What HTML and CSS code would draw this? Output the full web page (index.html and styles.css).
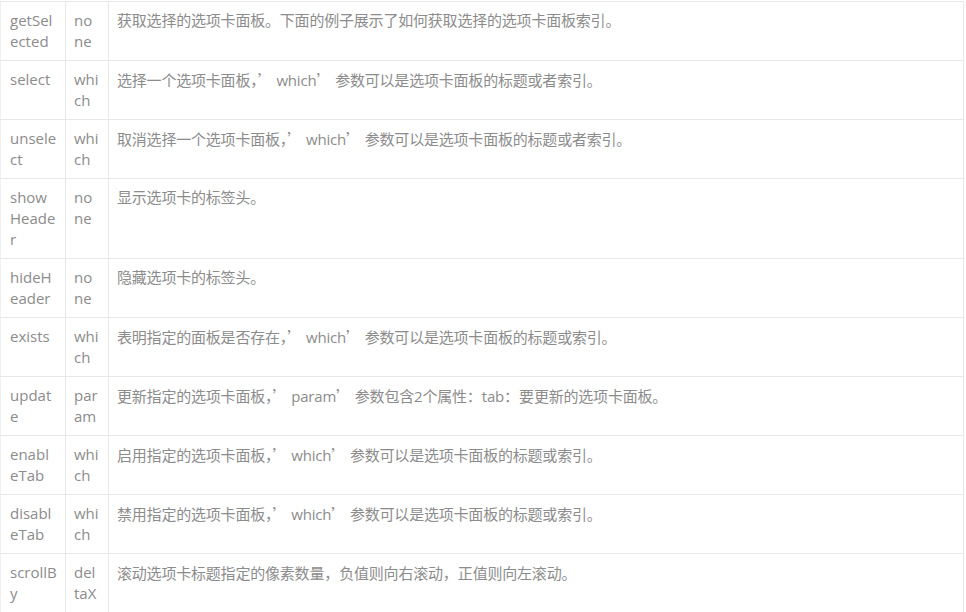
FILE: index.html
```html
<!DOCTYPE html>
<html>
<head>
  <meta charset="utf-8">
  <title>Tabs methods</title>
  <link rel="stylesheet" href="styles.css">
</head>
<body>
  <table class="methods">
    <colgroup>
      <col class="col-name">
      <col class="col-param">
      <col class="col-desc">
    </colgroup>
    <tbody>
      <tr>
        <td>getSelected</td>
        <td>none</td>
        <td>获取选择的选项卡面板。下面的例子展示了如何获取选择的选项卡面板索引。</td>
      </tr>
      <tr>
        <td>select</td>
        <td>which</td>
        <td>选择一个选项卡面板<span class="cjk">，’</span> which<span class="cjk">’</span> 参数可以是选项卡面板的标题或者索引。</td>
      </tr>
      <tr>
        <td>unselect</td>
        <td>which</td>
        <td>取消选择一个选项卡面板<span class="cjk">，’</span> which<span class="cjk">’</span> 参数可以是选项卡面板的标题或者索引。</td>
      </tr>
      <tr>
        <td>showHeader</td>
        <td>none</td>
        <td>显示选项卡的标签头。</td>
      </tr>
      <tr>
        <td>hideHeader</td>
        <td>none</td>
        <td>隐藏选项卡的标签头。</td>
      </tr>
      <tr>
        <td>exists</td>
        <td>which</td>
        <td>表明指定的面板是否存在<span class="cjk">，’</span> which<span class="cjk">’</span> 参数可以是选项卡面板的标题或索引。</td>
      </tr>
      <tr>
        <td>update</td>
        <td>param</td>
        <td>更新指定的选项卡面板<span class="cjk">，’</span> param<span class="cjk">’</span> 参数包含2个属性<span class="cjk">：</span>tab<span class="cjk">：</span>要更新的选项卡面板。</td>
      </tr>
      <tr>
        <td>enableTab</td>
        <td>which</td>
        <td>启用指定的选项卡面板<span class="cjk">，’</span> which<span class="cjk">’</span> 参数可以是选项卡面板的标题或索引。</td>
      </tr>
      <tr>
        <td>disableTab</td>
        <td>which</td>
        <td>禁用指定的选项卡面板<span class="cjk">，’</span> which<span class="cjk">’</span> 参数可以是选项卡面板的标题或索引。</td>
      </tr>
      <tr>
        <td>scrollBy</td>
        <td>deltaX</td>
        <td>滚动选项卡标题指定的像素数量<span class="cjk">，</span>负值则向右滚动<span class="cjk">，</span>正值则向左滚动。</td>
      </tr>
    </tbody>
  </table>
</body>
</html>
```

FILE: styles.css
```css
body {
  margin: 0;
  padding-top: 1px;
  background-color: #fff;
  font-family: "Open Sans", "Noto Sans CJK SC", sans-serif;
  font-size: 15px;
  line-height: 21px;
  color: #8c8c8c;
}

.methods {
  width: 964px;
  border-collapse: collapse;
  table-layout: fixed;
}

.col-name {
  width: 65px;
}

.col-param {
  width: 43px;
}

.methods td {
  padding: 8px;
  border: 1px solid #e8e8e8;
  vertical-align: top;
  text-align: left;
  word-break: break-all;
}

.methods td:first-child {
  padding-left: 9px;
  border-left-color: #f0f0f0;
}

.methods td:last-child {
  word-break: normal;
  letter-spacing: -0.2px;
}

/* full-width punctuation, as the CJK font draws it */
.cjk {
  font-family: "Noto Sans CJK SC", sans-serif;
  letter-spacing: 0;
}
```
